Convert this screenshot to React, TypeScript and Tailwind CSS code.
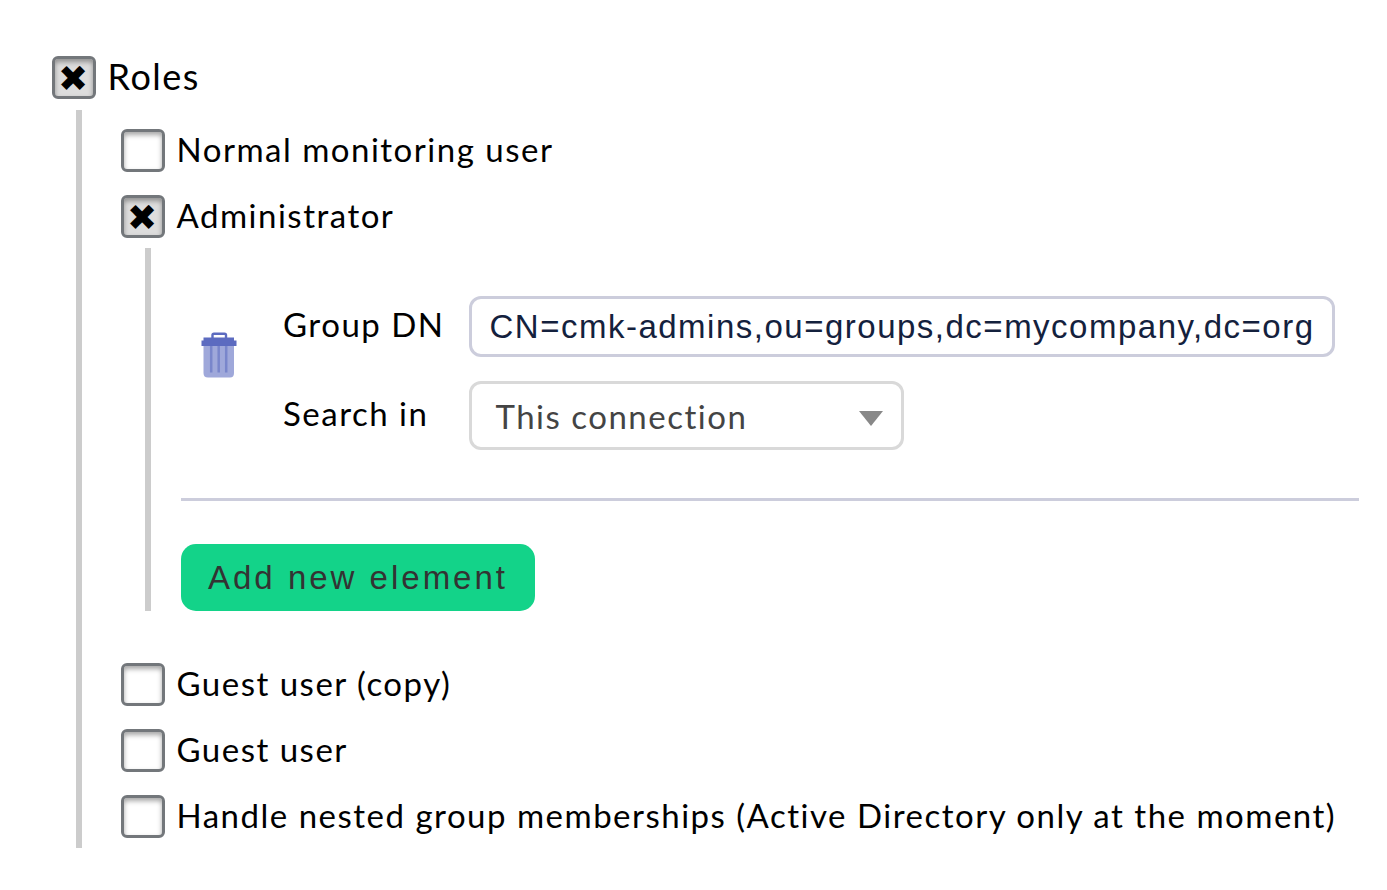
import React from "react";

function Check({ on = false }: { on?: boolean }) {
  return (
    <span className={`flex h-[43px] w-[44px] shrink-0 items-center justify-center rounded-[6px] border-[3px] border-[#73777b] shadow-[inset_0_3px_5px_rgba(0,0,0,0.35)] ${on ? "bg-[#dddddd]" : "bg-white"}`}>
      {on && (
        <span className="mr-[2px] mt-[2px] font-['DejaVu_Sans',sans-serif] text-[36px] leading-[37px]">✖</span>
      )}
    </span>
  );
}

function Row({ label, on, gap, size = "text-[33px]" }: { label: string; on?: boolean; gap: string; size?: string }) {
  return (
    <label className={`flex h-[43px] items-center gap-[11.5px] whitespace-nowrap ${gap}`}>
      <Check on={on} />
      <span className={`pb-[2px] leading-[41px] tracking-[1.5px] ${size}`}>{label}</span>
    </label>
  );
}

export default function App() {
  return (
    <div className="h-[890px] w-[1387px] overflow-hidden bg-white pl-[52px] pt-[56px] font-['Lato',sans-serif] text-black">
      <Row label="Roles" on gap="" size="text-[36px]" />
      <div className="ml-[24px] mt-[11px] h-[738px] border-l-[6px] border-[#cccccc] pl-[39px] pt-[19px]">
        <Row label="Normal monitoring user" gap="" />
        <Row label="Administrator" on gap="mt-[23px]" />
        <div className="ml-[24px] mt-[10px] h-[363px] border-l-[6px] border-[#cccccc] pl-[30px] pt-[48px]">
          <div className="flex h-[154px]">
            <svg className="ml-[20px] mt-[36px]" width="36" height="46" viewBox="0 0 36 46">
              <path d="M2.500 13H33V41Q33 45.500 29 45.500H7Q2.500 45.500 2.500 41Z" fill="#9fa8da" />
              <path d="M10.200 14V40.500M17.700 14V40.500M25.200 14V40.500" stroke="#7986cb" strokeWidth="2.5" />
              <path d="M2.500 5.500H33V8.500H35.500V14H0.500V8.500H2.500Z" fill="#5c6bc0" />
              <path d="M11.500 6V3Q11.500 1.700 13 1.700H23.500Q25 1.700 25 3V6" fill="none" stroke="#5c6bc0" strokeWidth="2.4" />
            </svg>
            <div className="ml-[46px] flex flex-col">
              <div className="flex h-[61px] items-center">
                <span className="w-[186px] pb-[4px] text-[33px] leading-[41px] tracking-[1.5px]">Group DN</span>
                <div className="flex h-[61px] w-[866px] items-center rounded-[12px] border-[3px] border-[#cccddc] pl-[17.5px] font-['Liberation_Sans',sans-serif] text-[33px] tracking-[1.5px] text-[#14213d]">CN=cmk-admins,ou=groups,dc=mycompany,dc=org</div>
              </div>
              <div className="mt-[24px] flex h-[69px] items-center">
                <span className="w-[186px] pb-[4px] text-[33px] leading-[41px] tracking-[1.5px]">Search in</span>
                <div className="flex h-[69px] w-[435px] items-center justify-between rounded-[12px] border-[3px] border-[#d9d9d9] pl-[23.5px] pr-[18px] text-[33px] tracking-[1.5px] text-[#444]">
                  <span className="pt-[2px] leading-[41px]">This connection</span>
                  <svg className="mt-[6px]" width="24" height="15" viewBox="0 0 24 15"><path d="M0 0H24L12 15Z" fill="#888" /></svg>
                </div>
              </div>
            </div>
          </div>
          <div className="mt-[48px] h-[3px] w-[1178px] bg-[#cccddc]" />
          <button className="mt-[43px] flex h-[67px] w-[354px] items-center justify-center rounded-[15px] bg-[#13d389] font-['Liberation_Sans',sans-serif] text-[33px] tracking-[3px] text-[#333]">Add new element</button>
        </div>
        <Row label="Guest user (copy)" gap="mt-[52px]" />
        <Row label="Guest user" gap="mt-[23px]" />
        <Row label="Handle nested group memberships (Active Directory only at the moment)" gap="mt-[23px]" />
      </div>
    </div>
  );
}
